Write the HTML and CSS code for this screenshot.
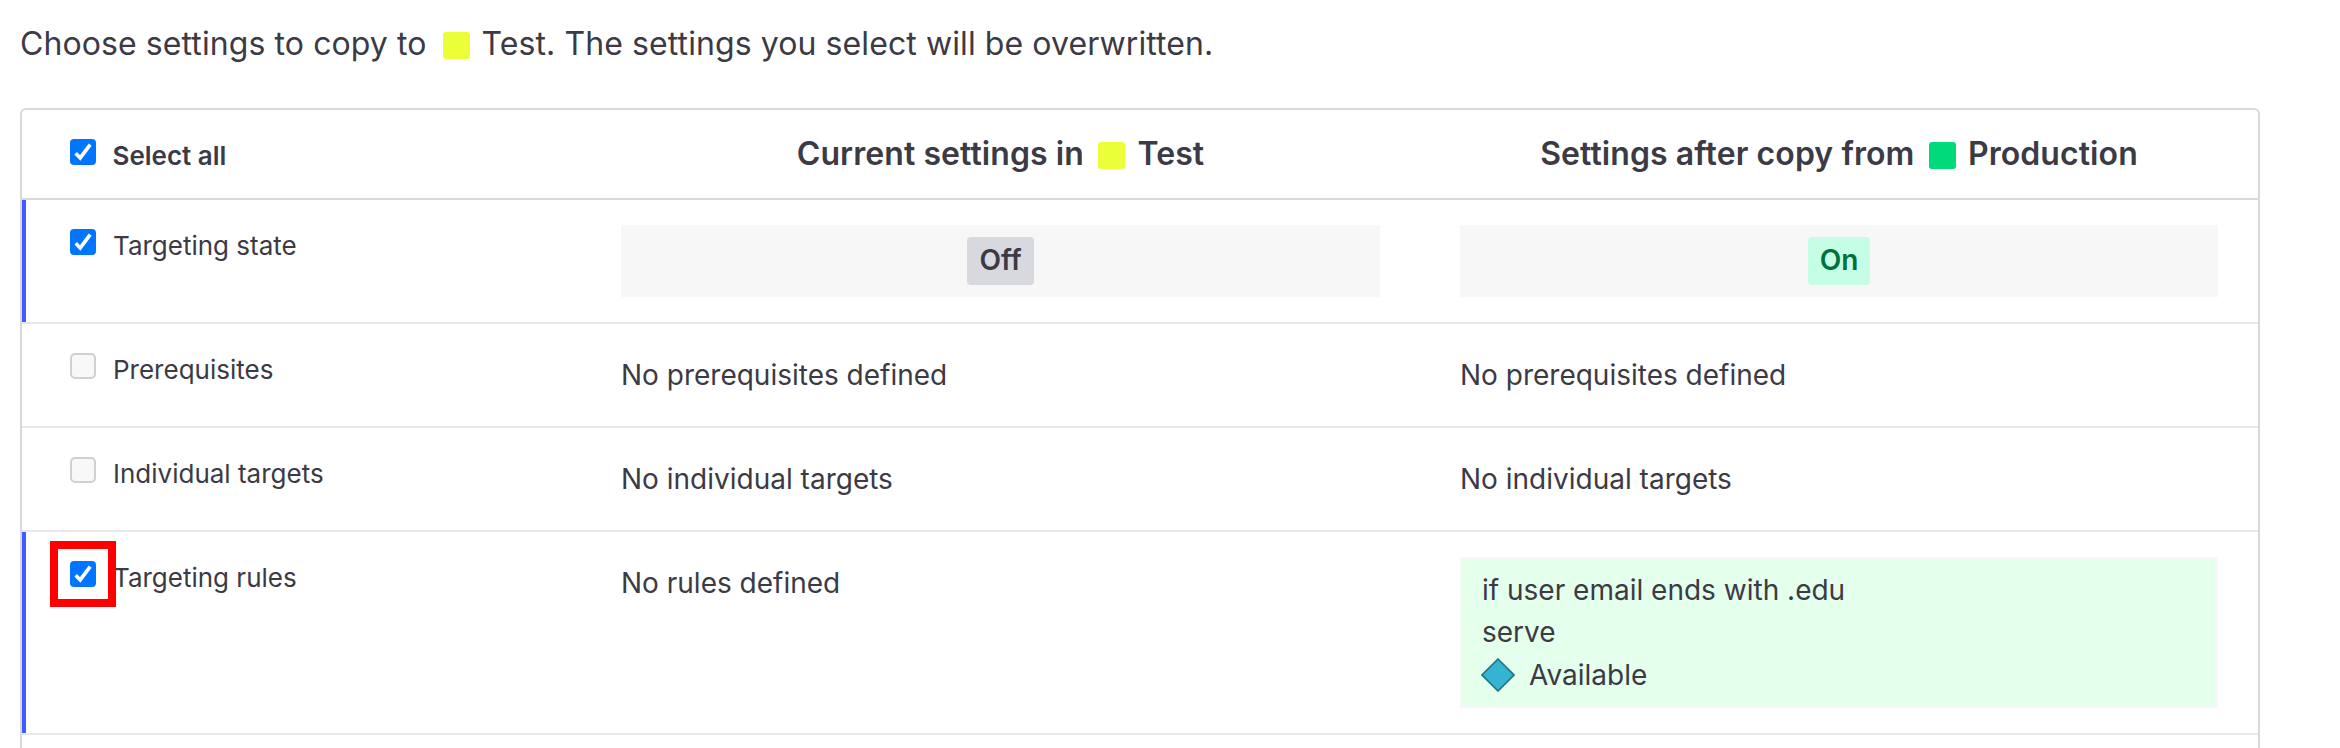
FILE: index.html
```html
<!DOCTYPE html>
<html lang="en">
<head>
<meta charset="utf-8">
<title>Copy settings</title>
<link rel="stylesheet" href="styles.css">
</head>
<body>
<svg class="defs" width="0" height="0" aria-hidden="true">
  <symbol id="check" viewBox="0 0 26 26"><path d="M5.7 14.3 10.2 18.9 20.2 5.6" fill="none" stroke="#fff" stroke-width="3.6"/></symbol>
</svg>
<p class="intro"><span>Choose settings to copy to</span><i class="swatch test"></i><span>Test. The settings you select will be overwritten.</span></p>
<main class="table">
  <div class="row head">
    <label class="name"><span class="box on"><svg><use href="#check"/></svg></span><span class="label-text">Select all</span></label>
    <h2 class="title"><span>Current settings in</span><i class="swatch test"></i><span>Test</span></h2>
    <h2 class="title"><span>Settings after copy from</span><i class="swatch prod"></i><span>Production</span></h2>
  </div>
  <div class="row state selected">
    <label class="name"><span class="box on"><svg><use href="#check"/></svg></span><span class="label-text">Targeting state</span></label>
    <div class="panel"><span class="badge off">Off</span></div>
    <div class="panel"><span class="badge live">On</span></div>
  </div>
  <div class="row">
    <label class="name"><span class="box"></span><span class="label-text">Prerequisites</span></label>
    <div class="text">No prerequisites defined</div>
    <div class="text">No prerequisites defined</div>
  </div>
  <div class="row">
    <label class="name"><span class="box"></span><span class="label-text">Individual targets</span></label>
    <div class="text">No individual targets</div>
    <div class="text">No individual targets</div>
  </div>
  <div class="row rules selected">
    <label class="name"><span class="box on"><svg><use href="#check"/></svg><b class="highlight"></b></span><span class="label-text">Targeting rules</span></label>
    <div class="text">No rules defined</div>
    <div class="added">
      <div>if user email ends with .edu</div>
      <div>serve</div>
      <div class="variation"><svg class="diamond" viewBox="0 0 34 34"><path d="M17 1 33 17 17 33 1 17Z" fill="#34b4d0" stroke="#1f7485" stroke-width="1.6"/></svg><span>Available</span></div>
    </div>
  </div>
</main>
</body>
</html>
```
FILE: styles.css
```css
* { box-sizing: border-box; }
body { margin: 0; height: 748px; padding: 20px 20px 0; background: #fff; color: #3b3a45; font: 28px/42px Inter, "Liberation Sans", sans-serif; }
.defs { display: block; height: 0; }
.intro { margin: 0 0 40px; height: 48px; display: flex; align-items: center; font-size: 32px; line-height: 48px; letter-spacing: .09px; white-space: nowrap; }
.swatch { width: 27px; height: 27px; border-radius: 3px; margin: 3px 12px 0 16px; flex: none; }
.swatch.test { background: #ebff38; }
.swatch.prod { background: #00da7b; }
.table { width: 2240px; height: 640px; border: 2px solid #d8d8de; border-bottom: 0; border-radius: 6px 6px 0 0; }
.row { display: grid; grid-template-columns: 599px 759px 758px; height: 104px; border-bottom: 2px solid #e7e7ed; position: relative; white-space: nowrap; }
.row > :nth-child(3) { margin-left: 80px; margin-right: -80px; }
.row.head { height: 90px; border-color: #d8d8de; }
.row.state { height: 124px; }
.row.rules { height: 203px; }
.selected::before { content: ""; position: absolute; left: 0; top: 0; bottom: 0; width: 4px; background: #405bff; }
.name { display: flex; align-items: flex-start; padding: 29px 0 0 48px; font-size: 26px; line-height: 34px; }
.label-text { margin-left: 17px; }
.head .label-text { font-weight: 600; margin-left: 16.5px; }
.box { width: 26px; height: 26px; border: 2px solid #d0d0d0; border-radius: 5px; background: #f8f8f8; position: relative; flex: none; }
.box.on { border: 0; border-radius: 4px; background: #0075ff; }
.box svg { display: block; width: 26px; height: 26px; }
.highlight { position: absolute; inset: -20px; border: 8px solid #f00; }
.title { margin: 0; display: flex; justify-content: center; align-items: center; font-size: 32px; line-height: 48px; font-weight: 600; letter-spacing: .08px; }
.title .swatch { margin-left: 14.5px; }
.panel { margin-top: 25px; height: 72px; background: #f7f7f7; display: flex; justify-content: center; align-items: center; }
.badge { height: 48px; padding: 0 12px; border-radius: 4px; line-height: 47px; font-weight: 600; }
.off { background: #d8d9de; }
.live { background: #c4ffe5; color: #00703e; }
.text { padding-top: 30px; }
.added { margin-top: 25px; height: 151px; padding: 10px 20px; border: 2px solid #f5f8f6; background: #e4ffec; }
.variation { display: flex; align-items: center; gap: 14px; margin: 1px 0 0 -1px; }
.diamond { width: 34px; height: 34px; }
```
